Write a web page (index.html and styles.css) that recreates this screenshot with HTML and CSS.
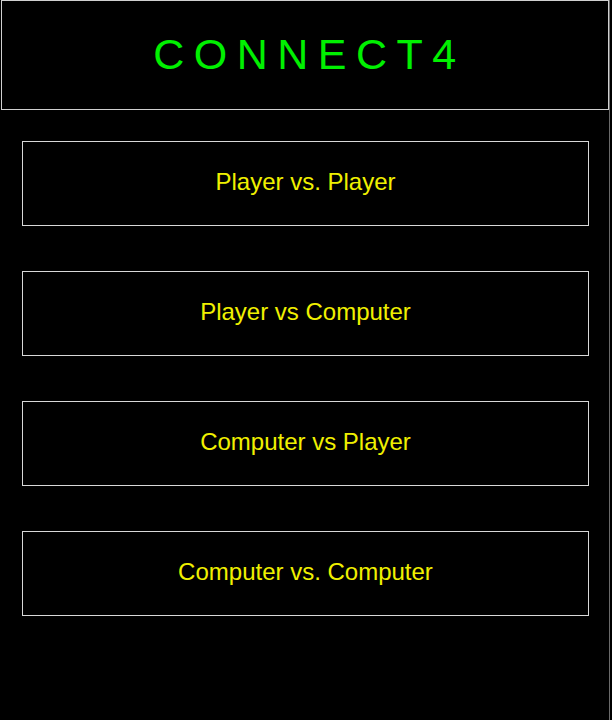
FILE: index.html
```html
<!DOCTYPE html>
<html>
<head>
<meta charset="utf-8">
<title>Connect 4</title>
<link rel="stylesheet" href="styles.css">
</head>
<body>
<div class="page">
  <header class="header">
    <h1 class="title">CONNECT4</h1>
  </header>
  <nav class="menu">
    <button class="mode">Player vs. Player</button>
    <button class="mode">Player vs Computer</button>
    <button class="mode">Computer vs Player</button>
    <button class="mode">Computer vs. Computer</button>
  </nav>
</div>
</body>
</html>
```

FILE: styles.css
```css
html, body {
  margin: 0;
  padding: 0;
  background: #000;
}

.page {
  width: 610px;
  min-height: 720px;
  box-sizing: border-box;
  border-right: 1px solid #6a6a6a;
  font-family: "Liberation Sans", Arial, sans-serif;
}

.header {
  margin-left: 1px;
  width: 608px;
  height: 110px;
  box-sizing: border-box;
  border: 1px solid #d0d0d0;
  display: flex;
  align-items: center;
  justify-content: center;
}

.title {
  margin: 0;
  font-size: 43px;
  font-weight: normal;
  color: #00f000;
  letter-spacing: 9.5px;
  padding-left: 9px;
  padding-bottom: 2px;
  line-height: 1;
}

.menu {
  display: flex;
  flex-direction: column;
  gap: 45px;
  padding: 31px 0 0 22px;
}

.mode {
  width: 567px;
  height: 85px;
  box-sizing: border-box;
  background: #000;
  border: 1px solid #d8d8d8;
  color: #f0f000;
  font-family: "Liberation Sans", Arial, sans-serif;
  font-size: 24px;
  padding: 0 0 4px 0;
  margin: 0;
  display: flex;
  align-items: center;
  justify-content: center;
  cursor: pointer;
}
```
